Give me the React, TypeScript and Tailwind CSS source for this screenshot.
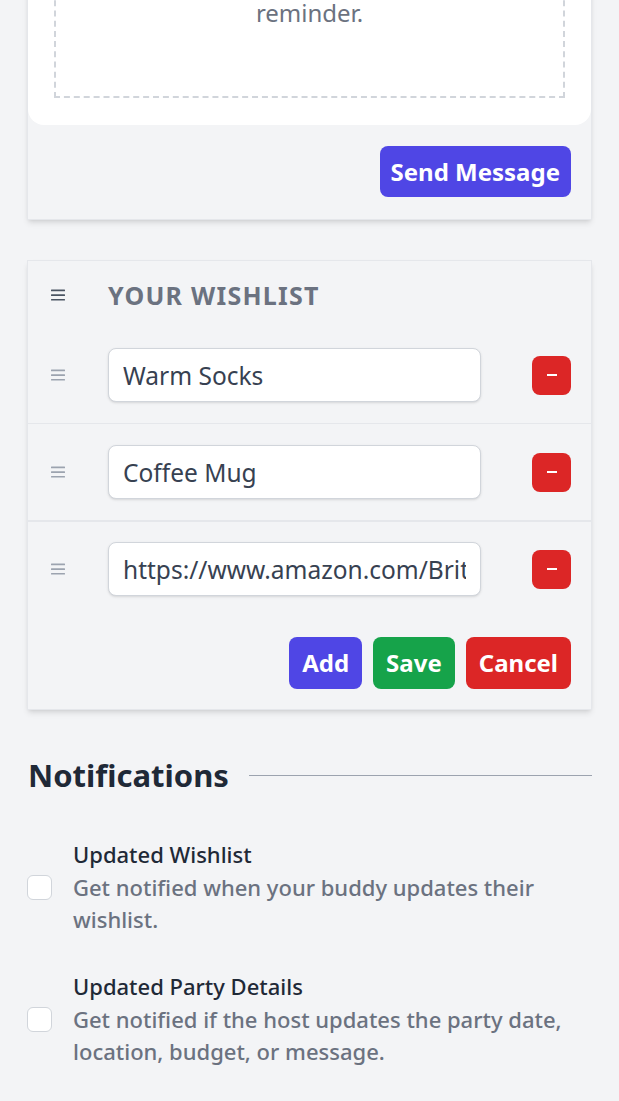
import { useState } from 'react';

function DragHandle({ className }: { className: string }) {
  return (
    <svg width="14" height="12" viewBox="0 0 14 12" className={className} fill="currentColor">
      <rect x="0" y="0.5" width="14" height="1.7" rx="0.5" />
      <rect x="0" y="5.2" width="14" height="1.7" rx="0.5" />
      <rect x="0" y="9.9" width="14" height="1.7" rx="0.5" />
    </svg>
  );
}

const initialItems = ['Warm Socks', 'Coffee Mug', 'https://www.amazon.com/British-Shorthair-Cat-Mug'];

export default function App() {
  const [items, setItems] = useState(initialItems);
  const [prefs, setPrefs] = useState({ wishlist: false, party: false });

  return (
    <div className="min-h-screen bg-[#f3f4f6] px-[27px] pb-10 font-['Noto_Sans',sans-serif] overflow-hidden">
      {/* Message card (scrolled partly off screen) */}
      <div className="-mt-[30px] border border-[#e5e7eb] bg-[#f3f4f6] shadow-md">
        <div className="rounded-b-2xl bg-white px-[26px] pt-[9px] pb-[27px]">
          <div className="border-2 border-dashed border-[#d1d5db] pt-[15px] pb-[67px] text-center text-2xl leading-8 text-[#6b7280]">
            reminder.
          </div>
        </div>
        <div className="flex justify-end px-[20px] pt-[21px] pb-[22px]">
          <button className="h-[51px] rounded-lg bg-[#4f46e5] px-[11px] text-2xl font-bold text-white">
            Send Message
          </button>
        </div>
      </div>

      {/* Wishlist */}
      <div className="mt-[40px] border border-[#e5e7eb] bg-[#f3f4f6] shadow-md">
        <div className="flex items-center pl-[23px] pt-[19px] pb-[16px]">
          <DragHandle className="text-[#4b5563]" />
          <h2 className="ml-[43px] text-[25px] font-bold leading-[30px] tracking-wider text-[#6b7280]">
            YOUR WISHLIST
          </h2>
        </div>
        {items.map((item, i) => (
          <div
            key={i}
            className={
              i === 0
                ? 'flex items-center pl-[23px] pr-[20px] pt-[22px] pb-[21px] border-b border-[#e5e7eb]'
                : i === 1
                ? 'flex items-center pl-[23px] pr-[20px] pt-[21px] pb-[21px] border-b-2 border-[#e5e7eb]'
                : 'flex items-center pl-[23px] pr-[20px] pt-[20px] pb-[21px]'
            }
          >
            <DragHandle className="text-[#9ca3af]" />
            <input
              value={item}
              onChange={(e) => setItems(items.map((v, j) => (j === i ? e.target.value : v)))}
              className="ml-[43px] h-[54px] min-w-0 flex-1 rounded-lg border border-[#d1d5db] bg-white px-[14px] text-[24.5px] text-[#374151] shadow-sm outline-none"
            />
            <button
              onClick={() => setItems(items.filter((_, j) => j !== i))}
              className="ml-[51px] flex h-[39px] w-[39px] items-center justify-center rounded-lg bg-[#dc2626]"
            >
              <span className="block h-[2px] w-[10px] bg-white" />
            </button>
          </div>
        ))}
        <div className="flex justify-end gap-[11px] px-[20px] pt-[20px] pb-[20px]">
          <button
            onClick={() => setItems([...items, ''])}
            className="h-[52px] rounded-lg bg-[#4f46e5] px-[13px] text-2xl font-bold text-white"
          >
            Add
          </button>
          <button className="h-[52px] rounded-lg bg-[#16a34a] px-[13px] text-2xl font-bold text-white">Save</button>
          <button className="h-[52px] rounded-lg bg-[#dc2626] px-[13px] text-2xl font-bold text-white">Cancel</button>
        </div>
      </div>

      {/* Notifications */}
      <div className="mt-[47px] flex items-center gap-5">
        <h2 className="pl-px text-[31px] font-bold leading-9 text-[#1f2937]">Notifications</h2>
        <div className="h-px flex-1 bg-[#9ca3af]" />
      </div>

      <div className="mt-[46px] flex flex-col gap-[36px]">
        <label className="flex items-center gap-[21px]">
          <input
            type="checkbox"
            checked={prefs.wishlist}
            onChange={() => setPrefs({ ...prefs, wishlist: !prefs.wishlist })}
            className="h-[25px] w-[25px] shrink-0 appearance-none rounded-md border border-[#d1d5db] bg-white"
          />
          <div>
            <div className="text-[22px] font-medium leading-[30px] text-[#1f2937]">Updated Wishlist</div>
            <p className="mt-[2px] text-[22px] font-medium leading-8 text-[#6b7280]">
              Get notified when your buddy updates their wishlist.
            </p>
          </div>
        </label>
        <label className="flex items-center gap-[21px]">
          <input
            type="checkbox"
            checked={prefs.party}
            onChange={() => setPrefs({ ...prefs, party: !prefs.party })}
            className="h-[25px] w-[25px] shrink-0 appearance-none rounded-md border border-[#d1d5db] bg-white"
          />
          <div>
            <div className="text-[22px] font-medium leading-[30px] text-[#1f2937]">Updated Party Details</div>
            <p className="mt-[2px] text-[22px] font-medium leading-8 text-[#6b7280]">
              Get notified if the host updates the party date, location, budget, or message.
            </p>
          </div>
        </label>
      </div>
    </div>
  );
}
